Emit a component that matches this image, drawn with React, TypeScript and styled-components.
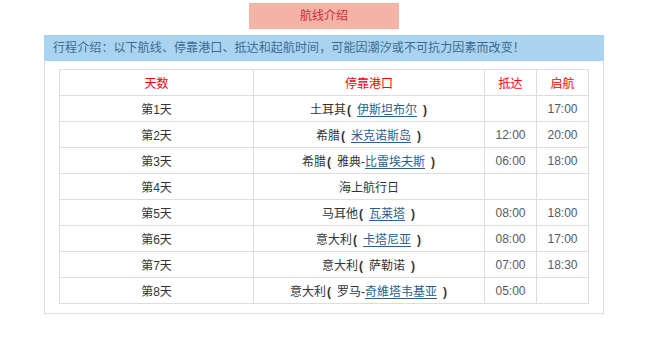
import styled, { createGlobalStyle } from "styled-components";

const GlobalStyle = createGlobalStyle`
  body {
    margin: 0;
    background: #fff;
    font-family: "Liberation Sans", "Noto Sans CJK SC", sans-serif;
  }
`;

type Port = { text: string; link?: boolean };

const rows: { day: string; country: string; ports: Port[]; arrive: string; depart: string }[] = [
  { day: "第1天", country: "土耳其", ports: [{ text: "伊斯坦布尔", link: true }], arrive: "", depart: "17:00" },
  { day: "第2天", country: "希腊", ports: [{ text: "米克诺斯岛", link: true }], arrive: "12:00", depart: "20:00" },
  { day: "第3天", country: "希腊", ports: [{ text: "雅典-" }, { text: "比雷埃夫斯", link: true }], arrive: "06:00", depart: "18:00" },
  { day: "第4天", country: "", ports: [{ text: "海上航行日" }], arrive: "", depart: "" },
  { day: "第5天", country: "马耳他", ports: [{ text: "瓦莱塔", link: true }], arrive: "08:00", depart: "18:00" },
  { day: "第6天", country: "意大利", ports: [{ text: "卡塔尼亚", link: true }], arrive: "08:00", depart: "17:00" },
  { day: "第7天", country: "意大利", ports: [{ text: "萨勒诺" }], arrive: "07:00", depart: "18:30" },
  { day: "第8天", country: "意大利", ports: [{ text: "罗马-" }, { text: "奇維塔韦基亚", link: true }], arrive: "05:00", depart: "" },
];

const App = () => {
  return (
    <>
      <GlobalStyle />
      <Page>
        <TitleTab>航线介绍</TitleTab>
        <Panel>
          <Notice>行程介绍：以下航线、停靠港口、抵达和起航时间，可能因潮汐或不可抗力因素而改变！</Notice>
          <Schedule>
            <colgroup>
              <col style={{ width: 194 }} />
              <col style={{ width: 231 }} />
              <col style={{ width: 52 }} />
              <col style={{ width: 52 }} />
            </colgroup>
            <thead>
              <tr>
                <HeadCell>天数</HeadCell>
                <HeadCell>停靠港口</HeadCell>
                <HeadCell>抵达</HeadCell>
                <HeadCell>启航</HeadCell>
              </tr>
            </thead>
            <tbody>
              {rows.map((r) => (
                <tr key={r.day}>
                  <Cell>{r.day}</Cell>
                  <Cell>
                    {r.country ? (
                      <>
                        {r.country}
                        <Paren $open>(</Paren>
                        {r.ports.map((p, i) =>
                          p.link ? <PortLink key={i}>{p.text}</PortLink> : <span key={i}>{p.text}</span>
                        )}
                        <Paren>)</Paren>
                      </>
                    ) : (
                      r.ports.map((p, i) => <span key={i}>{p.text}</span>)
                    )}
                  </Cell>
                  <Cell $time>{r.arrive}</Cell>
                  <Cell $time>{r.depart}</Cell>
                </tr>
              ))}
            </tbody>
          </Schedule>
        </Panel>
      </Page>
    </>
  );
};

const Page = styled.div`
  width: 560px;
  margin: 0 auto;
  padding-top: 3px;
  display: flex;
  flex-direction: column;
  align-items: center;
`;

const TitleTab = styled.div`
  width: 150px;
  height: 26px;
  line-height: 26px;
  text-align: center;
  background: #f3b3a6;
  color: #d3283a;
  font-size: 12px;
  margin-bottom: 6px;
`;

const Panel = styled.div`
  width: 560px;
  box-sizing: border-box;
  border: 1px solid #dddddd;
  border-top: none;
  padding-bottom: 9px;
`;

const Notice = styled.div`
  height: 26px;
  line-height: 26px;
  margin: 0 -1px;
  padding-left: 9px;
  background: #a9d3ee;
  color: #3b6b92;
  font-size: 12px;
  letter-spacing: 0.1px;
  white-space: nowrap;
`;

const Schedule = styled.table`
  width: 530px;
  margin: 8px 14px 0;
  border-collapse: collapse;
  table-layout: fixed;
  font-size: 12px;
`;

const HeadCell = styled.th`
  height: 25px;
  padding: 0;
  border: 1px solid #dddddd;
  color: #ff0000;
  font-weight: normal;
  text-align: center;
`;

const Cell = styled.td<{ $time?: boolean }>`
  height: 25px;
  padding: 0;
  border: 1px solid #dddddd;
  text-align: center;
  white-space: nowrap;
  color: ${({ $time }) => ($time ? "#555a66" : "#333333")};
`;

const Paren = styled.span<{ $open?: boolean }>`
  font-weight: bold;
  margin: ${({ $open }) => ($open ? "0 6px 0 1px" : "0 1px 0 6px")};
`;

const PortLink = styled.span`
  color: #2a5f8e;
  text-decoration: underline;
  text-underline-offset: 2px;
`;

export default App;
